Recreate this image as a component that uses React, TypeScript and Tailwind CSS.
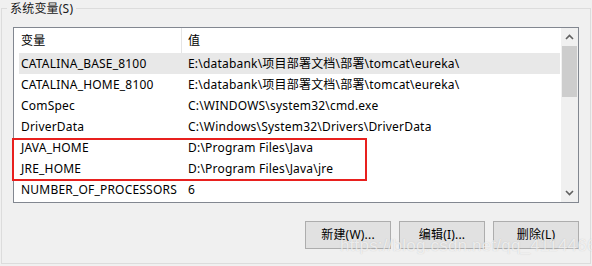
const rows: [string, string][] = [
  ['CATALINA_BASE_8100', 'E:\\databank\\项目部署文档\\部署\\tomcat\\eureka\\'],
  ['CATALINA_HOME_8100', 'E:\\databank\\项目部署文档\\部署\\tomcat\\eureka\\'],
  ['ComSpec', 'C:\\WINDOWS\\system32\\cmd.exe'],
  ['DriverData', 'C:\\Windows\\System32\\Drivers\\DriverData'],
  ['JAVA_HOME', 'D:\\Program Files\\Java'],
  ['JRE_HOME', 'D:\\Program Files\\Java\\jre'],
  ['NUMBER_OF_PROCESSORS', '6'],
];

const font = { fontFamily: '"Noto Sans", "Noto Sans CJK SC", sans-serif' };

function Chevron({ up }: { up?: boolean }) {
  return (
    <svg width="9" height="6" viewBox="0 0 9 6">
      <path d={up ? 'M1 5 L4.5 1.5 L8 5' : 'M1 1 L4.5 4.5 L8 1'} fill="none" stroke="#606060" strokeWidth="1.6" />
    </svg>
  );
}

export default function App() {
  return (
    <div className="relative w-[592px] h-[266px] bg-[#f0f0f0] text-[12px] tracking-[0.2px] text-black overflow-hidden" style={font}>
      {/* group box */}
      <div className="relative mt-[8px] ml-[1px] w-[590px] h-[256px] border border-[#dcdcdc] pt-[18px] pl-[11px]">
        <div className="absolute -top-[9px] left-[5px] px-[3px] bg-[#f0f0f0] leading-[18px] text-[#1a1a1a]">系统变量(S)</div>

        {/* list */}
        <div className="flex w-[566px] h-[176px] border border-[#828790] bg-white">
          <div className="flex-1 flex flex-col overflow-hidden">
            <div className="flex h-[25px] items-center shrink-0">
              <div className="w-[168px] h-full pl-[7px] flex items-center border-r border-[#e5e5e5]">变量</div>
              <div className="pl-[6px]">值</div>
            </div>
            {rows.map(([k, v], i) => (
              <div
                key={k}
                className={`flex h-[21px] shrink-0 items-center ml-[5px] mr-[1px] ${i === 0 ? 'bg-[#e8e8e8]' : ''}`}
              >
                <div className="w-[163px] pl-[2px] whitespace-nowrap">{k}</div>
                <div className="pl-[6px] whitespace-nowrap">{v}</div>
              </div>
            ))}
          </div>
          {/* scrollbar */}
          <div className="w-[17px] flex flex-col bg-[#f0f0f0]">
            <div className="h-[18px] flex items-center justify-center"><Chevron up /></div>
            <div className="h-[51px] mx-[1px] bg-[#cdcdcd]" />
            <div className="flex-1" />
            <div className="h-[18px] flex items-center justify-center"><Chevron /></div>
          </div>
        </div>

        {/* buttons */}
        <div className="flex justify-end gap-[8px] mt-[18px] w-[566px]">
          {['新建(W)...', '编辑(I)...', '删除(L)'].map((b) => (
            <button
              key={b}
              className="w-[86px] h-[28px] border border-[#adadad] bg-[#e1e1e1] flex items-center justify-center tracking-[0.2px]"
            >
              {b}
            </button>
          ))}
        </div>
      </div>

      {/* red annotation box */}
      <div className="absolute left-[12px] top-[138px] w-[355px] h-[43px] border-2 border-[#e8201e]" />

      {/* watermark */}
      <div
        className="absolute left-[340px] top-[236px] text-[17px] leading-[20px] text-white/70 whitespace-nowrap"
        style={{ fontFamily: '"Liberation Sans", sans-serif', textShadow: '0 0 1px rgba(120,120,120,0.35)' }}
      >
        https://blog.csdn.net/qq_41144667
      </div>
    </div>
  );
}
